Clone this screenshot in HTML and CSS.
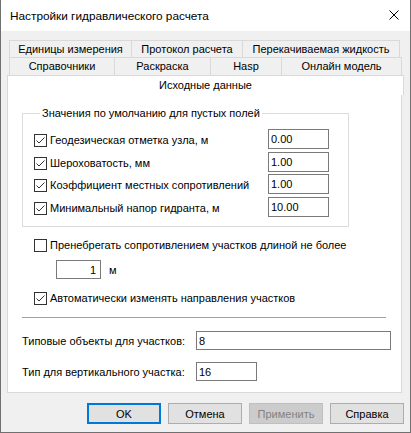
FILE: index.html
```html
<!DOCTYPE html>
<html lang="ru">
<head>
    <meta charset="UTF-8">
    <title>Настройки гидравлического расчета</title>
    <link rel="stylesheet" href="styles.css">
</head>
<body>

    <div class="window">
        <div class="titlebar">
            <span class="title">Настройки гидравлического расчета</span>
            <svg class="close" width="10" height="10" viewBox="0 0 10 10">
                <path d="M0.5 0.5 L9.5 9.5 M9.5 0.5 L0.5 9.5" stroke="#000" stroke-width="1" fill="none"/>
            </svg>
        </div>

        <div class="client">
            <div class="tab-row row-back">
                <div class="tab">Единицы измерения</div>
                <div class="tab">Протокол расчета</div>
                <div class="tab">Перекачиваемая жидкость</div>
            </div>
            <div class="tab-row row-mid">
                <div class="tab">Справочники</div>
                <div class="tab">Раскраска</div>
                <div class="tab">Hasp</div>
                <div class="tab">Онлайн модель</div>
            </div>
            <div class="tab-active">Исходные данные</div>

            <div class="panel">
                <fieldset class="group">
                    <legend>Значения по умолчанию для пустых полей</legend>
                    <div class="field-row">
                        <label class="check"><span class="box checked"></span>Геодезическая отметка узла, м</label>
                        <input class="edit" type="text" value="0.00">
                    </div>
                    <div class="field-row">
                        <label class="check"><span class="box checked"></span>Шероховатость, мм</label>
                        <input class="edit" type="text" value="1.00">
                    </div>
                    <div class="field-row">
                        <label class="check"><span class="box checked"></span>Коэффициент местных сопротивлений</label>
                        <input class="edit" type="text" value="1.00">
                    </div>
                    <div class="field-row">
                        <label class="check"><span class="box checked"></span>Минимальный напор гидранта, м</label>
                        <input class="edit" type="text" value="10.00">
                    </div>
                </fieldset>

                <label class="check option-ignore"><span class="box"></span>Пренебрегать сопротивлением участков длиной не более</label>
                <div class="length-row">
                    <input class="edit edit-short" type="text" value="1">
                    <span class="unit">м</span>
                </div>
                <label class="check option-auto"><span class="box checked"></span>Автоматически изменять направления участков</label>

                <div class="separator"></div>

                <div class="type-row first">
                    <span class="type-label">Типовые объекты для участков:</span>
                    <input class="edit edit-wide" type="text" value="8">
                </div>
                <div class="type-row">
                    <span class="type-label">Тип для вертикального участка:</span>
                    <input class="edit edit-type" type="text" value="16">
                </div>
            </div>

            <div class="buttons">
                <button class="btn default">OK</button>
                <button class="btn">Отмена</button>
                <button class="btn" disabled>Применить</button>
                <button class="btn">Справка</button>
            </div>
        </div>
    </div>

</body>
</html>
```

FILE: styles.css
```css
body {
    margin: 0;
    font-family: "Liberation Sans", Arial, sans-serif;
    font-size: 11px;
    color: #000;
    background-color: #f0f0f0;
}

.window {
    width: 411px;
    height: 433px;
    box-sizing: border-box;
    border: 1px solid #707070;
    border-top: none;
    background-color: #f0f0f0;
    display: flex;
    flex-direction: column;
}

.titlebar {
    height: 31px;
    flex: none;
    background-color: #fff;
    display: flex;
    align-items: center;
    justify-content: space-between;
    padding: 0 11px 0 9px;
}

.title {
    font-size: 11.8px;
    padding-top: 1px;
}

.close {
    display: block;
    margin-top: -1px;
}

.client {
    flex: 1;
    padding: 9px 0 0 6px;
}

/* tabs */

.tab-row {
    display: grid;
    margin-left: 2px;
}

.row-back {
    grid-template-columns: 123px 111px 157px;
    height: 17px;
}

.row-mid {
    grid-template-columns: 106px 96px 71px 120px;
    height: 18px;
}

.tab {
    border: 1px solid #d9d9d9;
    border-bottom: none;
    border-left: none;
    text-align: center;
    line-height: 17px;
    white-space: nowrap;
}

.tab:first-child {
    border-left: 1px solid #d9d9d9;
}

.tab-active {
    width: 397px;
    height: 20px;
    box-sizing: border-box;
    background-color: #fff;
    border: 1px solid #d9d9d9;
    border-bottom: none;
    text-align: center;
    line-height: 19px;
}

.panel {
    width: 395px;
    height: 298px;
    box-sizing: border-box;
    background-color: #fff;
    border: 1px solid #d9d9d9;
    border-top: none;
    padding: 11px 0 0 14px;
}

/* group box */

.group {
    width: 327px;
    box-sizing: border-box;
    margin: 0;
    padding: 9px 0 7px 11px;
    border: 1px solid #dcdcdc;
}

.group legend {
    padding: 0 2px;
    margin-left: 6px;
    line-height: 14px;
}

.field-row {
    display: grid;
    grid-template-columns: 234px 61px;
    height: 22.5px;
}

.check {
    display: flex;
    align-items: center;
    line-height: 13px;
    white-space: nowrap;
}

.field-row .check {
    margin-top: 5px;
    align-self: start;
}

.box {
    width: 13px;
    height: 13px;
    box-sizing: border-box;
    border: 1px solid #333;
    background-color: #fff;
    margin-right: 3px;
    flex: none;
}

.box.checked {
    background-image: url("data:image/svg+xml,%3Csvg xmlns='http://www.w3.org/2000/svg' width='11' height='11'%3E%3Cpath d='M1.5 5.5 L4 8 L9.5 2.5' stroke='%23333' stroke-width='1' fill='none'/%3E%3C/svg%3E");
}

.edit {
    height: 20px;
    box-sizing: border-box;
    border: 1px solid #7a7a7a;
    background-color: #fff;
    font-family: inherit;
    font-size: 11px;
    color: #000;
    padding: 0 2px;
    margin: 0;
    outline: none;
}

.field-row .edit {
    width: 61px;
}

.option-ignore {
    margin: 12px 0 0 12px;
}

.length-row {
    display: flex;
    align-items: center;
    margin: 8px 0 0 34px;
}

.edit-short {
    width: 45px;
    height: 19px;
    text-align: right;
    padding-right: 4px;
}

.unit {
    margin-left: 8px;
}

.option-auto {
    margin: 13px 0 0 12px;
}

.separator {
    width: 364px;
    height: 1px;
    background-color: #a0a0a0;
    margin-top: 12px;
}

.type-row {
    display: grid;
    grid-template-columns: 162px auto;
    column-gap: 12px;
    align-items: center;
    margin-top: 12px;
}

.type-row.first {
    margin-top: 13px;
}

.type-label {
    text-align: right;
    white-space: nowrap;
}

.edit-wide {
    width: 195px;
    height: 19px;
}

.edit-type {
    width: 61px;
    height: 19px;
}

/* buttons */

.buttons {
    display: flex;
    justify-content: flex-end;
    gap: 7px;
    margin-top: 10px;
    padding-right: 6px;
}

.btn {
    width: 74px;
    height: 21px;
    box-sizing: border-box;
    border: 1px solid #adadad;
    background-color: #e1e1e1;
    font-family: inherit;
    font-size: 11px;
    color: #000;
    padding: 0;
}

.btn.default {
    border: 2px solid #0078d7;
}

.btn:disabled {
    background-color: #cccccc;
    border-color: #bfbfbf;
    color: #838383;
}
```
